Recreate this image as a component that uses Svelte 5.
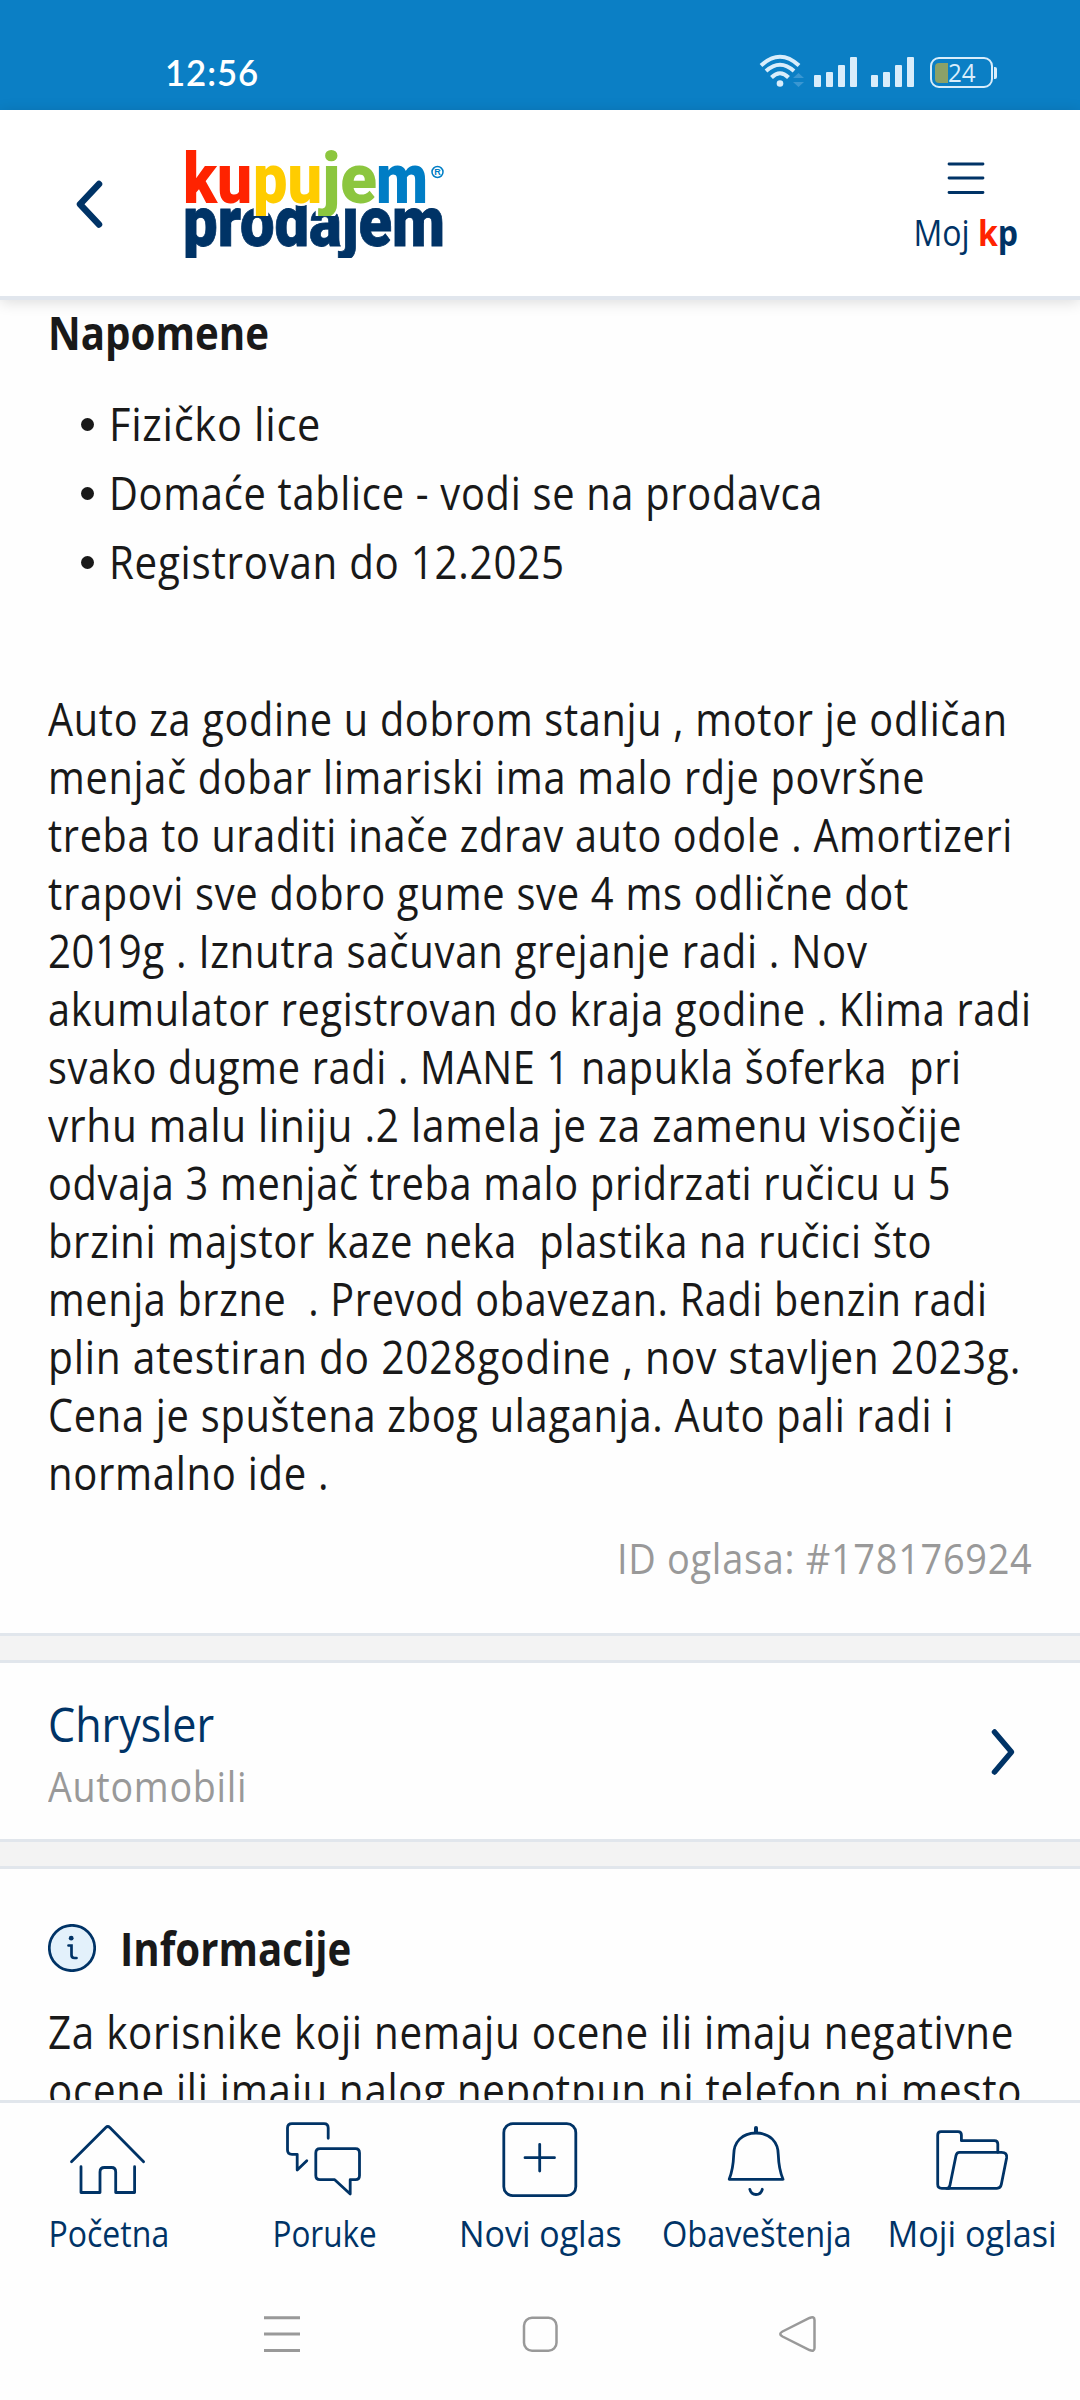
<script lang="ts">
	interface Line {
		text: string;
		width: number;
	}

	const notes: Line[] = [
		{ text: 'Fizičko lice', width: 212 },
		{ text: 'Domaće tablice - vodi se na prodavca', width: 714 },
		{ text: 'Registrovan do 12.2025', width: 456 }
	];

	const description: Line[] = [
		{ text: 'Auto za godine u dobrom stanju , motor je odličan', width: 960 },
		{ text: 'menjač dobar limariski ima malo rdje površne', width: 877 },
		{ text: 'treba to uraditi inače zdrav auto odole . Amortizeri', width: 965 },
		{ text: 'trapovi sve dobro gume sve 4 ms odlične dot', width: 861 },
		{ text: '2019g . Iznutra sačuvan grejanje radi . Nov', width: 820 },
		{ text: 'akumulator registrovan do kraja godine . Klima radi', width: 984 },
		{ text: 'svako dugme radi . MANE 1 napukla šoferka  pri', width: 914 },
		{ text: 'vrhu malu liniju .2 lamela je za zamenu visočije', width: 914 },
		{ text: 'odvaja 3 menjač treba malo pridrzati ručicu u 5', width: 903 },
		{ text: 'brzini majstor kaze neka  plastika na ručici što', width: 884 },
		{ text: 'menja brzne  . Prevod obavezan. Radi benzin radi', width: 940 },
		{ text: 'plin atestiran do 2028godine , nov stavljen 2023g.', width: 973 },
		{ text: 'Cena je spuštena zbog ulaganja. Auto pali radi i', width: 906 },
		{ text: 'normalno ide .', width: 281 }
	];

	const info: Line[] = [
		{ text: 'Za korisnike koji nemaju ocene ili imaju negativne', width: 966 },
		{ text: 'ocene ili imaju nalog nepotpun ni telefon ni mesto', width: 974 }
	];

	const tabs = [
		{ id: 'home', label: 'Početna', width: 121 },
		{ id: 'chat', label: 'Poruke', width: 104 },
		{ id: 'add', label: 'Novi oglas', width: 163 },
		{ id: 'bell', label: 'Obaveštenja', width: 190 },
		{ id: 'folder', label: 'Moji oglasi', width: 169 }
	];

	const bars = [12, 15, 22, 30];

	const logoParts = [
		{ text: 'ku', x: -2, width: 69, color: '#ff2300' },
		{ text: 'pu', x: 68, width: 69, color: '#ffcc00' },
		{ text: 'je', x: 137, width: 55, color: '#8cc63e' },
		{ text: 'm', x: 191, width: 52, color: '#007dc5' }
	];

	// condense a single line of text to the given width
	function fit(node: HTMLElement, width: number) {
		node.style.transform = `scaleX(${width / node.offsetWidth})`;
	}
</script>

<div class="screen">
	<div class="status">
		<span class="clock" use:fit={94}>12:56</span>
		<div class="indicators">
			<svg class="wifi" width="46" height="36" viewBox="0 0 46 36">
				<g fill="none" stroke="#d9edfb" stroke-width="4">
					<path d="M2 13.500 Q21 -4 40 13.500" />
					<path d="M7 19 Q21 6.500 35 19" />
					<path d="M12.500 25.500 Q21 17 29.500 25.500" />
				</g>
				<circle cx="21" cy="31.500" r="3.300" fill="#d9edfb" />
				<path d="M34 26 L39.500 21 L45 26 Z M34 30 L39.500 35 L45 30 Z" fill="#3a97d2" />
			</svg>
			{#each [0, 1] as sim (sim)}
				<div class="signal">
					{#each bars as height (height)}
						<i style="height: {height}px"></i>
					{/each}
				</div>
			{/each}
			<div class="battery">
				<i class="charge"></i>
				<span use:fit={28}>24</span>
			</div>
		</div>
	</div>

	<header class="header">
		<svg class="back" width="34" height="56" viewBox="0 0 34 56">
			<path d="M27 8 L8 28.200 L27 48.500" />
		</svg>
		<svg class="logo" width="262" height="112" viewBox="0 0 262 112" aria-label="kupujem prodajem">
			<defs>
				<clipPath id="clip-top"><rect x="0" y="0" width="262" height="68" /></clipPath>
				<clipPath id="clip-bottom"><rect x="0" y="57" width="262" height="53" /></clipPath>
			</defs>
			<g clip-path="url(#clip-bottom)">
				<text
					x="-2"
					y="98"
					textLength="262"
					lengthAdjust="spacingAndGlyphs"
					fill="#003366"
					stroke="#003366"
					stroke-width="0.800">prodajem</text
				>
			</g>
			<g clip-path="url(#clip-top)">
				{#each logoParts as part (part.text)}
					<text
						class="halo"
						x={part.x}
						y="55"
						textLength={part.width}
						lengthAdjust="spacingAndGlyphs"
						fill={part.color}>{part.text}</text
					>
				{/each}
			</g>
			<circle cx="252.500" cy="24" r="5.500" fill="none" stroke="#007dc5" stroke-width="1.500" />
			<text class="reg" x="249.300" y="27.300">R</text>
		</svg>
		<div class="my">
			<svg width="38" height="34" viewBox="0 0 38 34">
				<path d="M2 3 H36 M2 17 H36 M2 31.500 H36" />
			</svg>
			<span class="my-label" use:fit={105}>Moj <b class="red">k</b><b>p</b></span>
		</div>
	</header>

	<main class="content">
		<section class="ad">
			<h2><span use:fit={221}>Napomene</span></h2>
			<ul>
				{#each notes as note (note.text)}
					<li><span use:fit={note.width}>{note.text}</span></li>
				{/each}
			</ul>
			<div class="description">
				{#each description as line (line.text)}
					<div><span use:fit={line.width}>{line.text}</span></div>
				{/each}
			</div>
			<div class="ad-id"><span use:fit={416}>ID oglasa: #178176924</span></div>
		</section>

		<section class="category">
			<div>
				<div class="brand"><span use:fit={166}>Chrysler</span></div>
				<div class="group"><span use:fit={199}>Automobili</span></div>
			</div>
			<svg width="32" height="54" viewBox="0 0 32 54">
				<path d="M7.500 7 L24.500 27 L7.500 47" />
			</svg>
		</section>

		<section class="info">
			<div class="info-title">
				<svg width="48" height="48" viewBox="0 0 48 48">
					<circle cx="24" cy="24" r="22.700" fill="#e3f1fb" />
					<path d="M20.500 21.500 H23.500 V31 Q23.500 34 26.500 34 H28.500" />
					<circle class="dot" cx="23.200" cy="14.200" r="2.400" />
				</svg>
				<h2><span use:fit={231}>Informacije</span></h2>
			</div>
			<div class="description">
				{#each info as line (line.text)}
					<div><span use:fit={line.width}>{line.text}</span></div>
				{/each}
			</div>
		</section>
	</main>

	<nav class="tabs">
		{#each tabs as tab (tab.id)}
			<div class="tab">
				<svg width="96" height="90" viewBox="0 0 96 90">
					{#if tab.id === 'home'}
						<path d="M11.500 49.700 L45.800 15.500 Q47.800 13.500 49.800 15.500 L83.600 49.700" />
						<path
							d="M21 54.700 V80.500 H40 V60 Q40 55.500 44.500 55.500 H51.500 Q55.700 55.500 55.700 60 V80.500 H74.600 V54.700"
						/>
					{:else if tab.id === 'chat'}
						<path
							d="M52.200 26.300 V16 Q52.200 11.700 48 11.700 H16 Q11.500 11.700 11.500 16 V38 Q11.500 42.300 16 42.300 H21.200 V58 L30.800 48.700"
						/>
						<path
							d="M44 36.700 H79.500 Q83.500 36.700 83.500 41 V63.500 Q83.500 67.700 79.500 67.700 H74.200 V82 L58.700 67.700 H44 Q39.800 67.700 39.800 63.500 V41 Q39.800 36.700 44 36.700 Z"
						/>
					{:else if tab.id === 'add'}
						<rect x="11.800" y="11.700" width="72" height="72" rx="9" />
						<path d="M47.700 32.300 V59 M33 45.700 H62.500" />
					{:else if tab.id === 'bell'}
						<path d="M48 16 V20" stroke-width="4" />
						<path
							d="M21.200 67.300 Q25.200 57 25.700 43 C25.700 30 34 21 48 21 C62 21 70.300 30 70.300 43 Q70.800 57 75 67.300 Z"
						/>
						<path d="M41.800 77.300 Q43 82.500 48 82.500 Q53 82.500 54.300 77.300" />
					{:else}
						<path
							d="M25 76.300 H17.700 Q13.700 76.300 13.700 72.300 V23 Q13.700 19.700 17 19.700 H34 Q37.400 19.700 37.400 23 V28.700 H70.500 Q73.800 28.700 73.800 32 V40.300"
						/>
						<path
							d="M35.500 40.300 H77.500 Q83.500 40.300 82.600 46 L77.300 72.500 Q76.500 76.300 73 76.300 H22.500 Q25.300 76.300 26 73 L32 43.500 Q32.700 40.300 35.500 40.300 Z"
						/>
					{/if}
				</svg>
				<span use:fit={tab.width}>{tab.label}</span>
			</div>
		{/each}
	</nav>

	<div class="system">
		<svg width="40" height="40" viewBox="0 0 40 40">
			<path d="M2 3.700 H38 M2 20 H38 M2 36.400 H38" stroke-width="3" />
		</svg>
		<svg width="40" height="40" viewBox="0 0 40 40">
			<rect x="4" y="3.700" width="32.500" height="33" rx="8" />
		</svg>
		<svg width="40" height="40" viewBox="0 0 40 40">
			<path
				d="M4.500 17.500 L31.500 4 Q36.500 2 36.500 6 V34 Q36.500 38 31.500 36 L4.500 22.500 Q0 20 4.500 17.500 Z"
			/>
		</svg>
	</div>
</div>

<style>
	:global(body) {
		margin: 0;
		background: #fefefe;
	}

	.screen {
		display: flex;
		flex-direction: column;
		width: 1080px;
		height: 2400px;
		overflow: hidden;
		background: #fefefe;
		color: #191919;
		font-family: 'Open Sans', 'Noto Sans', sans-serif;
	}

	span {
		display: inline-block;
		white-space: pre;
		transform-origin: left center;
	}

	.status {
		display: flex;
		flex: none;
		align-items: flex-end;
		justify-content: space-between;
		box-sizing: border-box;
		height: 110px;
		padding: 0 83px 22px 165px;
		background: #0b7fc5;
		color: #fff;
	}

	.clock {
		margin-bottom: 1px;
		font: 600 37px/30px Lato, sans-serif;
		letter-spacing: 1px;
	}

	.indicators {
		display: flex;
		align-items: flex-end;
		color: #d9edfb;
	}

	.wifi {
		margin-right: 9px;
	}

	.signal {
		display: flex;
		align-items: flex-end;
		gap: 5px;
		margin: 0 14px 1px 0;
	}

	.signal i {
		width: 7px;
		border-radius: 1px;
		background: #d9edfb;
	}

	.battery {
		position: relative;
		display: flex;
		align-items: center;
		box-sizing: border-box;
		width: 63px;
		height: 31px;
		margin: 0 4px 0 2px;
		padding-left: 3px;
		border: 2px solid #d9edfb;
		border-radius: 9px;
		font: 25px/27px 'Open Sans', sans-serif;
	}

	.battery::after {
		content: '';
		position: absolute;
		right: -6px;
		top: 8px;
		width: 3px;
		height: 12px;
		border-radius: 0 2px 2px 0;
		background: #d9edfb;
	}

	.charge {
		width: 13px;
		height: 20px;
		border-radius: 4px 0 0 4px;
		background: #8ba168;
	}

	.header {
		position: relative;
		display: flex;
		flex: none;
		align-items: flex-start;
		box-sizing: border-box;
		height: 190px;
		border-bottom: 4px solid #e1e6ed;
		box-shadow: 0 2px 14px rgba(0, 0, 0, 0.14);
		background: #fff;
		color: #003366;
	}

	.back {
		margin: 66px 0 0 72px;
		fill: none;
		stroke: #003366;
		stroke-width: 6.5;
		stroke-linecap: round;
		stroke-linejoin: round;
	}

	.logo {
		margin: 38px 0 0 79px;
	}

	.logo text {
		font: 900 70px Roboto, 'Liberation Sans', sans-serif;
	}

	.logo .halo {
		stroke: #fff;
		stroke-width: 5;
		paint-order: stroke;
	}

	.logo .reg {
		font: 700 9px 'Liberation Sans', sans-serif;
		fill: #007dc5;
	}

	.my {
		display: flex;
		flex-direction: column;
		align-items: center;
		width: 104px;
		margin: 51px 0 0 467px;
	}

	.my svg {
		fill: none;
		stroke: #003366;
		stroke-width: 2.8;
		stroke-linecap: round;
	}

	.my-label {
		transform-origin: center;
		margin-top: 14px;
		font-size: 36px;
		line-height: 48px;
	}

	.red {
		color: #ff2300;
	}

	.content {
		flex: none;
		height: 1800px;
		overflow: hidden;
	}

	.ad {
		box-sizing: border-box;
		height: 1336px;
		padding: 2px 48px 0;
		border-bottom: 3px solid #e1e6ec;
	}

	h2 {
		margin: 0;
		font-size: 47px;
		font-weight: 700;
		line-height: 60px;
	}

	ul {
		margin: 27px 0 0;
		padding: 0;
		list-style: none;
	}

	li {
		display: flex;
		align-items: center;
		padding-left: 33px;
		font-size: 45px;
		letter-spacing: 0.8px;
		line-height: 69px;
	}

	li::before {
		content: '';
		width: 13px;
		height: 13px;
		margin: 2px 15px 0 0;
		border-radius: 50%;
		background: #191919;
	}

	.description {
		font-size: 45px;
		letter-spacing: 0.8px;
		line-height: 58px;
	}

	.ad .description {
		margin-top: 94px;
	}

	.ad-id {
		margin-top: 26px;
		color: #999;
		font-size: 42px;
		letter-spacing: 0.8px;
		line-height: 60px;
		text-align: right;
	}

	.ad-id span {
		transform-origin: right center;
	}

	.category {
		display: flex;
		align-items: center;
		justify-content: space-between;
		box-sizing: border-box;
		height: 182px;
		margin: 24px 0;
		padding: 1px 61px 0 48px;
		border-top: 3px solid #e1e6ec;
		border-bottom: 3px solid #e1e6ec;
		background: #fefefe;
		box-shadow: 0 0 0 24px #f3f3f3;
		clip-path: inset(-24px 0);
	}

	.category svg {
		fill: none;
		stroke: #003366;
		stroke-width: 5.5;
		stroke-linecap: round;
		stroke-linejoin: round;
	}

	.brand {
		margin-top: 3px;
		color: #003366;
		font-size: 47px;
		line-height: 64px;
	}

	.group {
		margin-top: 1px;
		color: #999;
		font-size: 42px;
		letter-spacing: 0.8px;
		line-height: 58px;
	}

	.info {
		padding: 49px 48px 0;
		border-top: 3px solid #e1e6ec;
	}

	.info-title {
		display: flex;
		align-items: center;
		gap: 24px;
		margin-bottom: 25px;
	}

	.info-title svg {
		fill: none;
		stroke: #003366;
		stroke-width: 2.7;
		stroke-linecap: round;
	}

	.info-title .dot {
		fill: #003366;
		stroke: none;
	}

	.tabs {
		display: grid;
		flex: none;
		grid-template-columns: repeat(5, 1fr);
		height: 160px;
		padding-top: 9px;
		border-top: 3px solid #e1e6ec;
		color: #003366;
	}

	.tab {
		display: flex;
		flex-direction: column;
		align-items: center;
	}

	.tab svg {
		fill: none;
		stroke: #003366;
		stroke-width: 2.8;
		stroke-linecap: round;
		stroke-linejoin: round;
	}

	.tab span {
		margin: 8px 0 0 1px;
		transform-origin: center;
		font-size: 36px;
		line-height: 48px;
	}

	.system {
		display: flex;
		justify-content: center;
		gap: 218px;
		padding-top: 42px;
	}

	.system svg {
		fill: none;
		stroke: #999;
		stroke-width: 2.5;
	}
</style>
